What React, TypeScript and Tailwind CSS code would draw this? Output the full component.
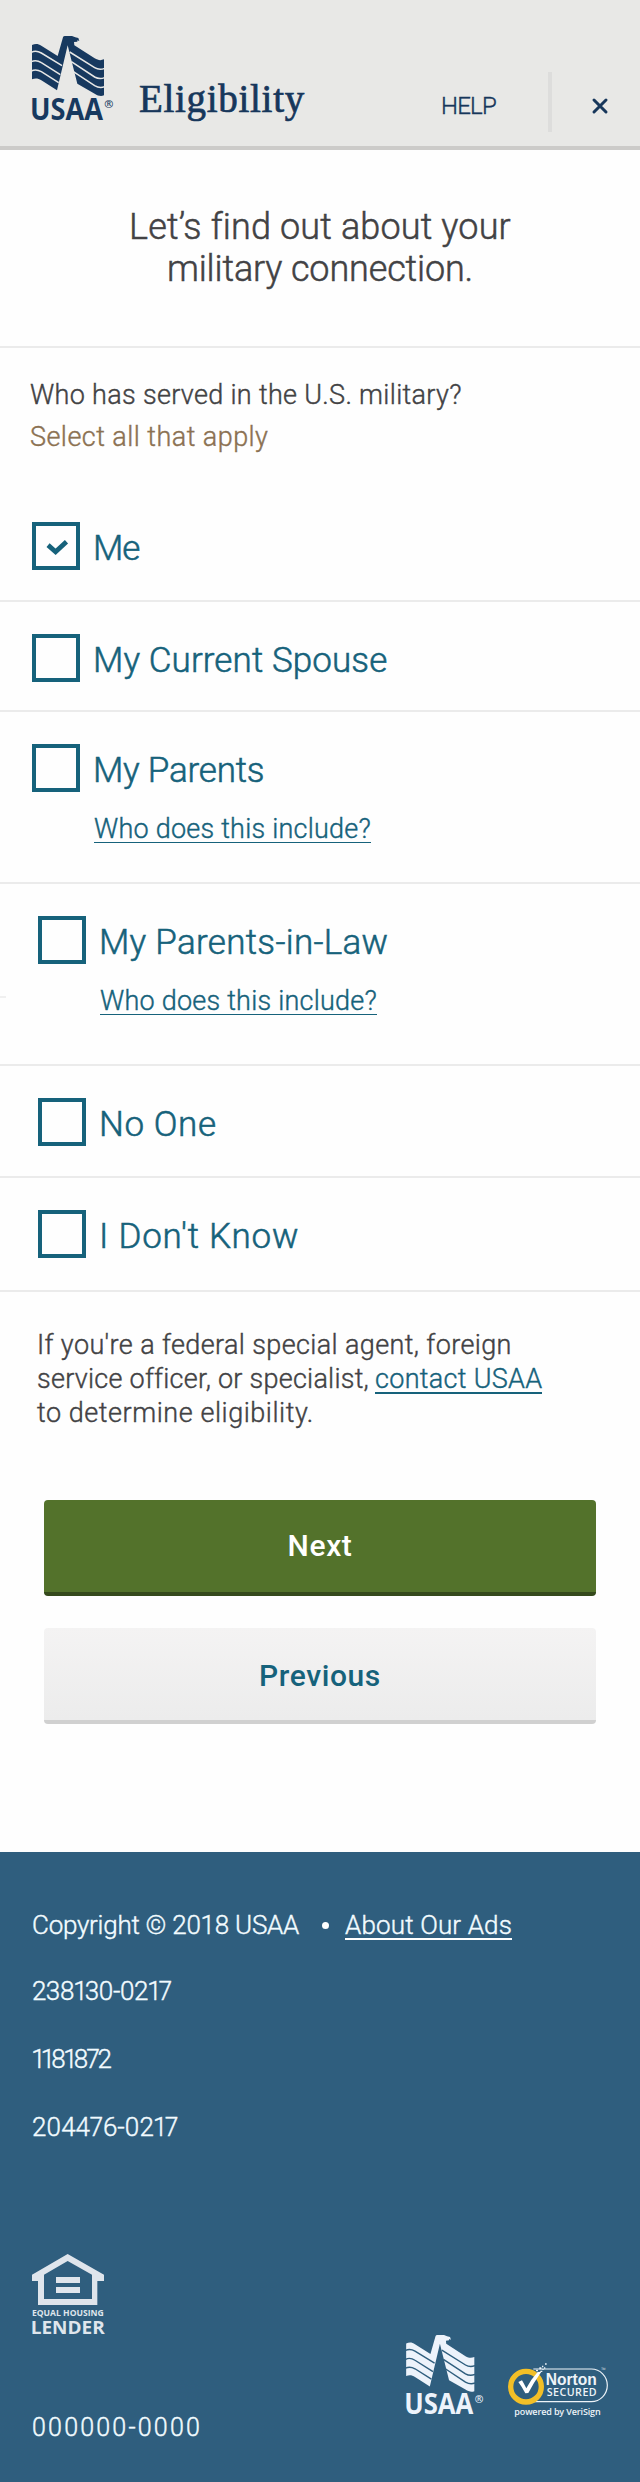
import React, { useState } from 'react'
import clsx from 'clsx'

interface UsaaLogoProps {
  color: string
  lineColor: string
  className?: string
}

function UsaaLogo({ color, lineColor, className }: UsaaLogoProps) {
  return (
    <svg viewBox="18 24 255 282" className={className} role="img" aria-label="USAA">
      <path
        fill={color}
        d="M24 51 C34 46 43 47 52 53 L101 84 L117 28 Q118 24 123 24 L144 24 Q154 29 163 30 L166 39 L160 37 L160 41 L150 42 L151 52 L212 91 C222 97 230 98 240 94 L240 202 C230 206 222 203 212 197 L160 167 L131 52 L99 187 L52 157 C43 151 34 150 24 154 Z"
      />
      <g fill="none" stroke={lineColor} strokeWidth="4.5">
        <path d="M22 73 C34 67 43 70 52 75 L114 113" />
        <path d="M22 101 C34 95 43 98 52 104 L109 140" />
        <path d="M22 129 C34 123 43 126 52 131 L104 164" />
        <path d="M137 72 L212 119 C222 125 232 125 242 121" />
        <path d="M142 101 L212 147 C222 153 232 153 242 149" />
        <path d="M148 131 L212 173 C222 179 232 180 242 176" />
      </g>
      <text x="18" y="275" fill={color} fontFamily="Open Sans, sans-serif" fontWeight="700" fontSize="90" textLength="219" lengthAdjust="spacingAndGlyphs">
        USAA
      </text>
      <text x="241" y="239" fill={color} fontFamily="Open Sans, sans-serif" fontWeight="600" fontSize="33">
        ®
      </text>
    </svg>
  )
}

function EqualHousingLogo() {
  return (
    <svg viewBox="-6 0 228 258" className="-ml-0.5 h-[86px] w-[76px]" fill="#dfe5ec">
      <path fillRule="evenodd" d="M107 0 L216 62 V81 H196 V153 H18 V81 H0 V62 Z M107 21 L36 62 V135 H180 V62 Z" />
      <path d="M72 69 H144 V87 H72 Z M72 99 H144 V117 H72 Z" />
      <text x="0" y="185" fontFamily="Open Sans, sans-serif" fontWeight="700" fontSize="26" textLength="215" lengthAdjust="spacingAndGlyphs">
        EQUAL HOUSING
      </text>
      <text x="-4" y="240" fontFamily="Open Sans, sans-serif" fontWeight="700" fontSize="52" textLength="222" lengthAdjust="spacingAndGlyphs">
        LENDER
      </text>
    </svg>
  )
}

function NortonBadge() {
  return (
    <svg viewBox="24 20 306 168" className="h-14 w-[102px]">
      <path d="M100 41 H274 A48 49 0 0 1 274 139 H100" fill="none" stroke="#edf3f8" strokeWidth="3.5" />
      <circle cx="78" cy="94" r="46" fill="#2f5e7e" stroke="#f2bf27" strokeWidth="16" />
      <path d="M55 80 L66 75 Q73 87 79 99 Q92 73 113 50 L124 49 Q101 82 85 113 L76 114 Q67 96 55 80 Z" fill="#fff" />
      <g fill="#edf3f8">
        <path d="M108 43 h6 v5 h-6 Z M118 36 h6 v6 h-6 Z M121 46 h6 v4 h-6 Z M126 31 h4 v5 h-4 Z M132 36 h4 v4 h-4 Z M135 24 h5 v4 h-5 Z M127 41 h4 v3 h-4 Z" />
        <text x="137" y="88" fontFamily="Liberation Sans, sans-serif" fontWeight="700" fontSize="47" textLength="153" lengthAdjust="spacingAndGlyphs">
          Norton
        </text>
        <text x="140" y="123" fontFamily="Open Sans, sans-serif" fontWeight="600" fontSize="32" textLength="150" lengthAdjust="spacing">
          SECURED
        </text>
        <text x="304" y="50" fontFamily="Open Sans, sans-serif" fontSize="18">
          ™
        </text>
        <text x="43" y="178" fontFamily="Open Sans, sans-serif" fontWeight="600" fontSize="27" textLength="259" lengthAdjust="spacing">
          powered by VeriSign
        </text>
      </g>
    </svg>
  )
}

interface Option {
  id: string
  label: string
  hint?: boolean
  // row padding and label tracking
  row: string
  text: string
}

const options: Option[] = [
  { id: 'me', label: 'Me', row: 'h-[80px] pl-8', text: 'tracking-[-1px]' },
  { id: 'spouse', label: 'My Current Spouse', row: 'h-[110px] pt-8 pl-8', text: 'tracking-[0.1px]' },
  { id: 'parents', label: 'My Parents', hint: true, row: 'h-[172px] pt-8 pl-8', text: 'tracking-[-0.2px]' },
  { id: 'in-law', label: 'My Parents-in-Law', hint: true, row: 'h-[182px] pt-8 pl-[38px]', text: 'tracking-[0.3px]' },
  { id: 'no-one', label: 'No One', row: 'h-[112px] pt-8 pl-[38px]', text: 'tracking-[0.6px]' },
  { id: 'unknown', label: "I Don't Know", row: 'h-[114px] pt-8 pl-[38px]', text: 'tracking-[0.8px]' },
]

interface OptionRowProps {
  option: Option
  checked: boolean
  onToggle: () => void
}

function OptionRow({ option, checked, onToggle }: OptionRowProps) {
  return (
    <div className={clsx('relative border-b-2 border-[#ebebeb]', option.row)}>
      <button type="button" role="checkbox" aria-checked={checked} onClick={onToggle} className="flex h-12 items-start text-left">
        <span className="flex size-12 shrink-0 items-center justify-center border-4 border-[#16627b]">
          {checked && (
            <svg viewBox="0 0 24 18" className="mt-[3px] ml-0.5 h-[17px] w-[23px]" fill="none" stroke="#16627b" strokeWidth="5">
              <path d="M2 6.5 L10 13.5 L21.5 3" />
            </svg>
          )}
        </span>
        <span className={clsx('mt-[3px] ml-[13px] text-[35px] leading-[48px] [-webkit-text-stroke:0.55px]', option.text)}>{option.label}</span>
      </button>
      {option.hint && (
        <div className="mt-5 ml-[62px] flex">
          <a href="#include" className="h-[31px] border-b border-[#16627b] text-[27px] leading-[35px] tracking-[0.23px]">
            Who does this include?
          </a>
        </div>
      )}
      {option.id === 'in-law' && <span className="absolute top-[112px] left-0 h-0.5 w-1.5 bg-[#f0f0f0]" />}
    </div>
  )
}

export default function App() {
  const [selected, setSelected] = useState<string[]>(['me'])

  const toggle = (id: string) => {
    setSelected((prev) => (prev.includes(id) ? prev.filter((s) => s !== id) : [...prev, id]))
  }

  return (
    <div className="w-[640px] bg-[#fefefe] font-['Roboto',sans-serif] font-light text-[#424244] [-webkit-text-stroke:0.4px]">
      <header className="flex h-[150px] items-start border-b-4 border-[#cccbc9] bg-[#e8e8e6] pl-[30px] text-[#17375b]">
        <UsaaLogo color="#17395f" lineColor="#e8e8e6" className="mt-9 h-[94px] w-[85px] [-webkit-text-stroke:0px]" />
        <h1 className="mt-[77px] ml-6 w-[302px] font-['Liberation_Serif',serif] text-[39px] leading-[44px] font-normal tracking-[0.7px] [-webkit-text-stroke:0.7px]">
          Eligibility
        </h1>
        <button type="button" className="mt-[90px] w-[107px] text-left text-[24px] leading-8 tracking-[-0.8px]">HELP</button>
        <div className="mt-[72px] h-[60px] w-1 bg-[#dddddc]" />
        <button type="button" aria-label="Close" className="mt-[97px] ml-[39px]">
          <svg viewBox="0 0 18 18" className="size-[18px]" stroke="#17375b" strokeWidth="3" strokeLinecap="round">
            <path d="M3 3 L15 15 M15 3 L3 15" />
          </svg>
        </button>
      </header>

      <section className="h-[198px] border-b-2 border-[#ebebeb] pt-14 text-center text-[36px] leading-[42px] [-webkit-text-stroke:0.5px]">
        <div className="tracking-[0.15px]">Let’s find out about your</div>
        <div className="tracking-[-0.15px]">military connection.</div>
      </section>

      <section className="h-[174px] pt-[26px] pl-[30px] text-[27px] leading-[42px] tracking-[0.32px]">
        <div>Who has served in the U.S. military?</div>
        <div className="tracking-[0.45px] text-[#8b7152]">Select all that apply</div>
      </section>

      <div className="text-[#16627b]">
        {options.map((option) => (
          <OptionRow key={option.id} option={option} checked={selected.includes(option.id)} onToggle={() => toggle(option.id)} />
        ))}
      </div>

      <section className="h-[208px] pt-9 pl-[37px] text-[27px] leading-[34px] whitespace-nowrap">
        <div className="tracking-[0.38px]">If you're a federal special agent, foreign</div>
        <div className="flex tracking-[0.25px]">
          <span className="w-[338px]">service officer, or specialist,</span>
          <a href="#contact" className="h-8 border-b-2 border-[#16627b] tracking-[0.3px] text-[#16627b]">contact USAA</a>
        </div>
        <div className="tracking-[0.55px]">to determine eligibility.</div>
      </section>

      <div className="flex h-[352px] flex-col gap-8 px-11 text-[30px] font-medium tracking-[0.6px] [-webkit-text-stroke:0px]">
        <button type="button" className="h-24 rounded-[4px] border-b-4 border-[#35491c] bg-[#53722b] pb-0.5 text-white">Next</button>
        <button type="button" className="h-24 rounded-[4px] border-b-4 border-[#d0d0d0] bg-linear-to-b from-[#f4f3f3] to-[#ececec] pt-0.5 text-[#16627b]">
          Previous
        </button>
      </div>

      <footer className="h-[630px] bg-[#2f5e7e] pt-14 pl-8 text-[26px] leading-[34px] text-[#f2fbff]">
        <div className="flex items-start">
          <span className="w-[290px] tracking-[-0.25px]">Copyright © 2018 USAA</span>
          <span className="mt-3.5 mr-4 size-[7px] rounded-full bg-white" />
          <a href="#ads" className="h-8 border-b-2 border-white tracking-[0.15px]">About Our Ads</a>
        </div>
        <div className="mt-8 flex flex-col gap-[34px] proportional-nums">
          <div className="tracking-[-0.6px]">238130-0217</div>
          <div className="tracking-[-1.9px]">1181872</div>
          <div className="tracking-[-0.1px]">204476-0217</div>
        </div>
        <div className="mt-[110px] flex items-start">
          <div className="w-[372px]">
            <EqualHousingLogo />
            <div className="mt-[71px] text-[25px] tracking-[2.2px]">000000-0000</div>
          </div>
          <UsaaLogo color="#edf3fb" lineColor="#2f5e7e" className="mt-[81px] h-[89px] w-[81px] [-webkit-text-stroke:0px]" />
          <div className="mt-[108px] ml-[23px] [-webkit-text-stroke:0px]">
            <NortonBadge />
          </div>
        </div>
      </footer>
    </div>
  )
}
